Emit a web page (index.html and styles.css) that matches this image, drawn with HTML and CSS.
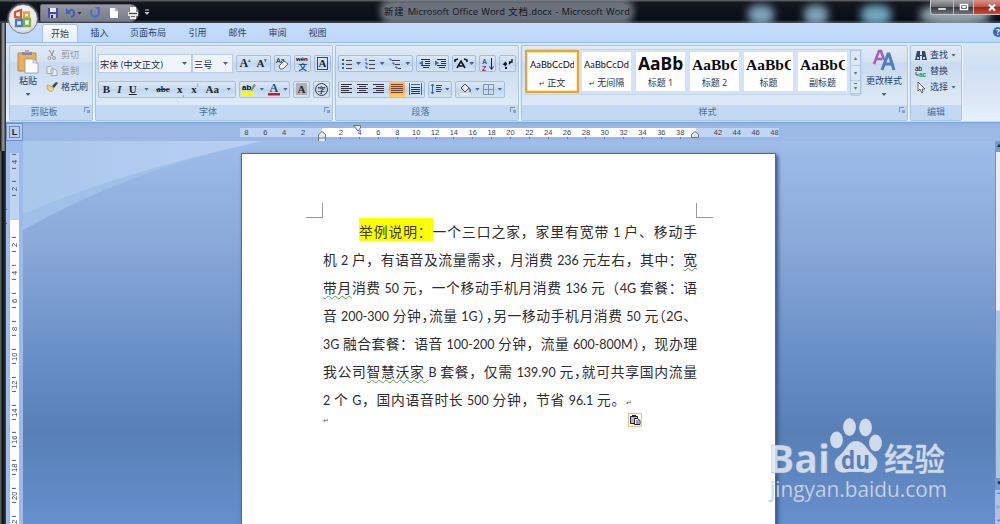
FILE: index.html
```html
<!DOCTYPE html>
<html lang="zh-CN">
<head>
<meta charset="utf-8">
<title>新建 Microsoft Office Word 文档.docx - Microsoft Word</title>
<link rel="stylesheet" href="styles.css">
</head>
<body>
<div class="window">
  <header class="titlebar">
    <i class="smudge s1"></i><i class="smudge s2"></i><i class="smudge s3"></i><i class="smudge s4"></i>
    <div class="qat">
      <svg width="12" height="12" viewBox="0 0 12 12"><path d="M1 1h10v10H2L1 10z" fill="#4a48b0"/><path d="M3 1h6v4H3z" fill="#eef"/><path d="M3 7h6v4H3z" fill="#ccd"/><path d="M4 8h2v3H4z" fill="#335"/></svg>
      <svg width="16" height="12" viewBox="0 0 16 12"><path d="M3 5q5-4 6 0t-3 5" fill="none" stroke="#3c62b8" stroke-width="2"/><path d="M1 1v6h5z" fill="#3c62b8"/><path d="M12.500 5h4l-2 2.500z" fill="#334"/></svg>
      <svg width="12" height="12" viewBox="0 0 12 12"><path d="M3 3a4 4 0 1 0 6 0" fill="none" stroke="#4770c8" stroke-width="2"/><path d="M6 0h5v5z" fill="#4770c8"/></svg>
      <svg width="10" height="12" viewBox="0 0 10 12"><path d="M1 1h5l3 3v7H1z" fill="#fff"/><path d="M6 1v3h3" fill="#bbc" stroke="#99a" stroke-width=".5"/></svg>
      <svg width="12" height="12" viewBox="0 0 12 12"><path d="M3 0h6v5H3z" fill="#fff"/><path d="M1 5h10v4H1z" fill="#ddd"/><path d="M2 6h8v1H2zM3 10h6v1H3z" fill="#444"/><path d="M3 8h6v4H3z" fill="#eee"/><path d="M4 9h4v1H4z" fill="#666"/></svg>
    </div>
    <svg class="qatmore" width="6" height="7" viewBox="0 0 6 7"><path d="M1 1h4" stroke="#bcd"/><path d="M.5 3h5L3 6z" fill="#bcd"/></svg>
    <h1 class="title">新建 Microsoft Office Word 文档.docx - Microsoft Word</h1>
    <div class="winbtns">
      <span><svg width="22" height="14"><path d="M7 8h8v2H7z" fill="#fff" stroke="#556" stroke-width=".5"/></svg></span>
      <span><svg width="19" height="14"><path d="M6.500 4.500h7v5h-7z" fill="none" stroke="#fff" stroke-width="1.500"/><path d="M8.500 6.500h3v1h-3z" fill="none" stroke="#fff"/></svg></span>
      <span class="close"><svg width="28" height="14"><path d="M15 4.500l6 6m0-6l-6 6" stroke="#fff" stroke-width="2.200"/></svg></span>
    </div>
  </header>

  <div class="orb">
    <svg width="30" height="30" viewBox="0 0 30 30"><g fill="none" stroke-width="2.300"><path d="M7 8l6-2v8l-6-1z" stroke="#d9542c"/><path d="M16 8.500h5v5h-5z" stroke="#e8a33b"/><path d="M8 16h6v6H8z" stroke="#3f7fcf"/><path d="M16 15h6v7h-6z" stroke="#7db343"/></g></svg>
  </div>

  <nav class="tabs">
    <span class="tab active">开始</span><span class="tab">插入</span><span class="tab wide">页面布局</span><span class="tab">引用</span><span class="tab">邮件</span><span class="tab">审阅</span><span class="tab">视图</span>
    <b class="help">?</b>
  </nav>

  <section class="ribbon">
    <div class="group clipboard">
      <div class="body clip">
        <div class="paste">
          <svg width="22" height="24" viewBox="0 0 22 24"><path d="M1 3h18v18H1z" fill="#e6b05c" stroke="#b98942"/><path d="M5 2h10v3H5z" fill="#889"/><path d="M8 0h4v3H8z" fill="#aab"/><path d="M8 9h8l5 4v10H8z" fill="#fbfcff" stroke="#8a96aa" stroke-width=".8"/><path d="M16 9v4h5" fill="#dde" stroke="#8a96aa" stroke-width=".6"/></svg>
          <span>粘贴</span><i class="dd"></i>
        </div>
        <div class="cmds">
          <span class="off"><svg width="10" height="10" viewBox="0 0 10 10"><path d="M2 0l4 6M7 0L4 6" stroke="#999ea6" stroke-width="1.300"/><circle cx="2.500" cy="8" r="1.500" fill="none" stroke="#999ea6"/><circle cx="7" cy="8" r="1.500" fill="none" stroke="#999ea6"/></svg>剪切</span>
          <span class="off"><svg width="12" height="10" viewBox="0 0 12 10"><path d="M1 .5h4l2 2v5H1zM5 3h4l2 2v4.500H5z" fill="#e8ecf2" stroke="#a3abb8"/></svg>复制</span>
          <span><svg width="12" height="10" viewBox="0 0 12 10"><path d="M6 4l4-4 2 1-4 5z" fill="#444"/><path d="M1 3l4 1 3 3-3 3-4-3z" fill="#efd56b" stroke="#a8862e" stroke-width=".5"/></svg>格式刷</span>
        </div>
      </div>
      <footer>剪贴板<i class="launch"></i></footer>
    </div>

    <div class="group font">
      <div class="body rows">
        <div class="row r1">
          <span class="combo c1">宋体 (中文正文)<i class="dd"></i></span><span class="combo c2">三号<i class="dd"></i></span>
          <span class="bx w34"><b class="ser big">A<sup>▴</sup></b><b class="ser">A<sup>▾</sup></b></span>
          <span class="bx w17"><svg width="15" height="15" viewBox="0 0 15 15"><text x="1" y="7" font-size="7" class="svgsans">Aa</text><path d="M4 10l5-5 4 3-5 5H5z" fill="#f4f6fb" stroke="#667"/></svg></span>
          <span class="bx w17"><svg width="15" height="15" viewBox="0 0 15 15"><text x="1" y="5" font-size="6" class="svgsans bold">wén</text><text x="3.500" y="13.500" font-size="8.500" class="svgcjk" fill="#2c4fa0">文</text></svg></span>
          <span class="bx w17"><b class="ser boxed">A</b></span>
        </div>
        <div class="row r2">
          <span class="bx w138"><b class="ser">B</b><b class="ser it">I</b><b class="ser un">U</b><i class="dd"></i><b class="ser strike">abc</b><b class="ser">x<sub>₂</sub></b><b class="ser">x<sup>²</sup></b><b class="ser">Aa</b><i class="dd"></i></span>
          <span class="bx w51"><svg width="16" height="14" viewBox="0 0 16 14"><path d="M1 10h12v3H1z" fill="#ff0"/><text x="1" y="8" font-size="8" class="svgsans bold">ab</text><path d="M9 8l4-6 2 1-4 6z" fill="#8e8f68"/></svg><i class="dd"></i><svg width="14" height="14" viewBox="0 0 14 14"><path d="M1 11h12v2.500H1z" fill="#e3121a"/><text x="2.500" y="10" font-size="12" class="svgser" fill="#284a8a">A</text></svg><i class="dd"></i></span>
          <span class="bx w17"><b class="ser shade">A</b></span>
          <span class="bx w17"><svg width="15" height="15" viewBox="0 0 15 15"><circle cx="7.500" cy="7.500" r="6" fill="none" stroke="#334"/><text x="3.500" y="10.500" font-size="8" class="svgcjk thin">字</text></svg></span>
        </div>
      </div>
      <footer>字体<i class="launch"></i></footer>
    </div>

    <div class="group para">
      <div class="body rows">
        <div class="row r1 tight">
          <span class="bx w74">
            <svg width="12" height="12" viewBox="0 0 12 12"><path d="M1 1h2v2H1zM1 5h2v2H1zM1 9h2v2H1z" fill="#3a5b9b"/><path d="M5 2.500h6M5 6.500h6M5 10.500h6" stroke="#445"/></svg><i class="dd"></i>
            <svg width="12" height="12" viewBox="0 0 12 12"><path d="M2 0v3M1 5h2v2M1 9h2v2" fill="none" stroke="#3a5b9b"/><path d="M5 2.500h6M5 6.500h6M5 10.500h6" stroke="#445"/></svg><i class="dd"></i>
            <svg width="14" height="12" viewBox="0 0 14 12"><path d="M1 1h2v2M4 5h2v2M7 9h2v2" fill="none" stroke="#3a5b9b"/><path d="M4 2.500h8M7 6.500h5M10 10.500h3" stroke="#445"/></svg><i class="dd"></i>
          </span>
          <span class="bx w33"><svg width="13" height="12" viewBox="0 0 13 12"><path d="M3 1.500h9M7 3.500h5M7 5.500h5M3 7.500h9M5 9.500h6" stroke="#334"/><path d="M5 2.500L1 5l4 2.500z" fill="#3d65ad"/></svg><svg width="13" height="12" viewBox="0 0 13 12"><path d="M3 1.500h9M7 3.500h5M7 5.500h5M3 7.500h9M5 9.500h6" stroke="#334"/><path d="M1 2.500L5 5 1 7.500z" fill="#3d65ad"/></svg></span>
          <span class="bx w24"><svg width="14" height="12" viewBox="0 0 14 12"><path d="M3 10l4-7 4 7M5 8h4M1 2l3-1M1 4V1M10 1l3 1v2" fill="none" stroke="#112" stroke-width="1.600"/></svg><i class="dd"></i></span>
          <span class="bx w17"><svg width="14" height="14" viewBox="0 0 14 14"><text x="1" y="6.500" font-size="7" class="svgsans bold" fill="#3558a0">A</text><text x="1" y="13.500" font-size="7" class="svgsans bold" fill="#8c3060">Z</text><path d="M10.500 1v11M8.500 9.500l2 3 2-3" fill="none" stroke="#223"/></svg></span>
          <span class="bx w17"><svg width="12" height="12" viewBox="0 0 12 12"><path d="M10 1v3H7M9 4L7 6M5 6H2l2-2M2 6l2 2" fill="none" stroke="#112" stroke-width="1.300"/><path d="M3 9h2v2H3z" fill="#112"/></svg></span>
        </div>
        <div class="row r2 tight">
          <span class="bx w87">
            <svg width="12" height="10" viewBox="0 0 12 10"><path d="M0 .5h11M0 2.500h8M0 4.500h11M0 6.500h8M0 8.500h11" stroke="#334"/></svg>
            <svg width="12" height="10" viewBox="0 0 12 10"><path d="M0 .5h11M2 2.500h7M0 4.500h11M2 6.500h7M0 8.500h11" stroke="#334"/></svg>
            <svg width="12" height="10" viewBox="0 0 12 10"><path d="M0 .5h11M3 2.500h8M0 4.500h11M3 6.500h8M0 8.500h11" stroke="#334"/></svg>
            <em class="on"><svg width="12" height="10" viewBox="0 0 12 10"><path d="M0 .5h12M0 2.500h12M0 4.500h12M0 6.500h12M0 8.500h12" stroke="#7c4428"/></svg></em>
            <svg width="13" height="12" viewBox="0 0 13 12"><path d="M.5 0v12M12.500 0v12M2 1.500h9" stroke="#3d65ad"/><path d="M2 4.500h9M2 6.500h9M2 8.500h9M2 10.500h9" stroke="#334"/></svg>
          </span>
          <span class="bx w24"><svg width="12" height="12" viewBox="0 0 12 12"><path d="M2.500 1v10M1 3l1.500-2L4 3M1 9l1.500 2L4 9" fill="none" stroke="#3d65ad"/><path d="M6 2.500h6M6 4.500h5M6 6.500h6M6 8.500h5" stroke="#445"/></svg><i class="dd"></i></span>
          <span class="bx w50"><svg width="14" height="12" viewBox="0 0 14 12"><path d="M3 5l4-4 4 4-4 4z" fill="#eef" stroke="#556"/><path d="M11 5q2 2 1 4" stroke="#3d65ad" stroke-width="1.500" fill="none"/><path d="M1 10h12v2H1z" fill="#fff" stroke="#aa9" stroke-width=".5"/></svg><i class="dd"></i><svg width="11" height="11" viewBox="0 0 11 11"><path d="M.5.5h10v10H.5zM5.500 0v11M0 5.500h11" fill="none" stroke="#8293b0"/></svg><i class="dd"></i></span>
        </div>
      </div>
      <footer>段落<i class="launch"></i></footer>
    </div>

    <div class="group styles">
      <div class="body stylebody">
        <div class="gallery">
          <div class="st sel"><b class="n">AaBbCcDd</b><span><small>↵</small> 正文</span></div>
          <div class="st"><b class="n">AaBbCcDd</b><span><small>↵</small> 无间隔</span></div>
          <div class="st"><b class="h1">AaBb</b><span>标题 1</span></div>
          <div class="st"><b class="h2">AaBbC</b><span>标题 2</span></div>
          <div class="st"><b class="h2">AaBbC</b><span>标题</span></div>
          <div class="st"><b class="h2">AaBbC</b><span>副标题</span></div>
          <div class="sb"><i>▴</i><i>▾</i><i>▾</i></div>
        </div>
        <div class="change">
          <svg width="24" height="23" viewBox="0 0 24 23"><path d="M2 15L7 2h2l3 9M4 10h6" fill="none" stroke="#a65bb5" stroke-width="2.500"/><path d="M10 21l6-16h1l5 16M12 15h8" fill="none" stroke="#4d7fc0" stroke-width="3"/></svg>
          <span>更改样式</span><i class="dd"></i>
        </div>
      </div>
      <footer>样式<i class="launch"></i></footer>
    </div>

    <div class="group edit">
      <div class="body cmds">
        <span><svg width="12" height="11" viewBox="0 0 12 11"><path d="M2 1h3v4h2V1h3l2 9H7V6H5v4H0z" fill="#33466f"/><path d="M2 7h2v2H2zM8 7h2v2H8z" fill="#c5d5ef"/></svg>查找<i class="dd"></i></span>
        <span><svg width="12" height="11" viewBox="0 0 12 11"><text x="0" y="5" font-size="6.500" class="svgsans">ab</text><text x="4" y="11" font-size="6.500" class="svgsans bold" fill="#294">ac</text><path d="M1 6v3h3" fill="none" stroke="#3558a0"/></svg>替换</span>
        <span><svg width="12" height="12" viewBox="0 0 12 12"><path d="M3 1v9l2-2 2 4 1-1-1-3h3z" fill="#fff" stroke="#445" stroke-width=".8"/></svg>选择<i class="dd"></i></span>
      </div>
      <footer>编辑</footer>
    </div>
  </section>

  <main class="work">
    <div class="rulerbar">
      <span class="tabsel">L</span>
      <div class="hruler"><b>8</b><b>6</b><b>4</b><b>2</b><b></b><b class="t">2</b><b class="t">4</b><b class="t">6</b><b class="t">8</b><b class="t">10</b><b class="t">12</b><b class="t">14</b><b class="t">16</b><b class="t">18</b><b class="t">20</b><b class="t">22</b><b class="t">24</b><b class="t">26</b><b class="t">28</b><b class="t">30</b><b class="t">32</b><b class="t">34</b><b class="t">36</b><b class="t">38</b><b></b><b>42</b><b>44</b><b>46</b><b>48</b>
        <svg class="mark m1" width="8" height="11" viewBox="0 0 8 11"><path d="M.5 10.500v-7L4 .5l3.500 3v7zM.5 7h7" fill="#e3eaf5" stroke="#6b7688"/></svg>
        <svg class="mark m2" width="8" height="7" viewBox="0 0 8 7"><path d="M.5.5h7V3L5 6z" fill="#e3eaf5" stroke="#6b7688"/></svg>
        <svg class="mark m3" width="8" height="7" viewBox="0 0 8 7"><path d="M.5 6.500v-3L4 .5l3.500 3v3z" fill="#e3eaf5" stroke="#6b7688"/></svg>
      </div>
    </div>
    <div class="canvas">
      <div class="vruler"><b>4</b><b>2</b><b></b><b>2</b><b>4</b><b>6</b><b>8</b><b>10</b><b>12</b><b>14</b><b>16</b><b>18</b><b>20</b><b>22</b></div>
      <div class="desk">
        <svg class="swoosh" width="240" height="90" viewBox="0 0 240 90"><defs><linearGradient id="sw" x2="1"><stop stop-color="#a8c8ea"/><stop offset="1" stop-color="#bacff4"/></linearGradient></defs><path d="M0 0h240Q110 27 0 89z" fill="#9fc0e8"/><path d="M0 0h240Q100 30 0 73z" fill="url(#sw)"/></svg>
        <article class="page">
          <div class="corners"><i class="cl"></i><i class="cr"></i></div>
          <p class="line first"><mark>举例说明：</mark>一个三口之家，家里有宽带 <span class="l">1</span> 户、移动手</p>
          <p class="line">机 <span class="l">2</span> 户，有语音及流量需求，月消费 <span class="l">236</span> 元左右，其中：<u>宽</u></p>
          <p class="line"><u>带月</u>消费 <span class="l">50</span> 元，一个移动手机月消费 <span class="l">136</span> 元（<span class="l">4G</span> 套餐：语</p>
          <p class="line">音 <span class="l">200-300</span> 分钟<s>，</s>流量 <span class="l">1G</span>）<s>，</s>另一移动手机月消费 <span class="l">50</span> 元<s class="o">（</s><span class="l">2G</span>、</p>
          <p class="line"><span class="l">3G</span> 融合套餐：语音 <span class="l">100-200</span> 分钟，流量 <span class="l">600-800M</span>），现办理</p>
          <p class="line">我公司<u>智慧沃家 </u><span class="l">B</span> 套餐，仅需 <span class="l">139.90</span> 元<s>，</s>就可共享国内流量</p>
          <p class="line last"><span class="l">2</span> 个 <span class="l">G</span>，国内语音时长 <span class="l">500</span> 分钟，节省 <span class="l">96.1</span> 元。<small>↵</small></p>
          <div class="after"><small>↵</small><svg width="14" height="14" viewBox="0 0 14 14"><path d="M.5.5h13v13H.5z" fill="#fffdf2" stroke="#dcc785"/><path d="M2.500 3.500h7v7h-7z" fill="#b9b9cc" stroke="#223"/><path d="M4 2h4v2H4z" fill="#223"/><path d="M6.500 5.500h3l2.500 2v4H6.500z" fill="#fff" stroke="#224"/><path d="M8 8h3M8 10h3" stroke="#446"/></svg></div>
        </article>
        <aside class="vscroll"><i class="split"></i><i class="up">▲</i><i class="track"></i><i class="down">▼</i><i class="nav">⌃</i><i class="nav">○</i><i class="nav">⌄</i></aside>
      </div>
    </div>
  </main>

  <svg class="watermark" width="190" height="95" viewBox="0 0 190 95">
    <g fill="#e0e7f3" fill-opacity=".88" stroke="#7687a6" stroke-opacity=".3" stroke-width=".8">
      <text x="6" y="58" class="wmbold" font-size="40" textLength="62" lengthAdjust="spacingAndGlyphs">Bai</text>
      <ellipse cx="74.500" cy="25" rx="6.500" ry="8.500"/><ellipse cx="87.500" cy="12" rx="6.500" ry="9"/><ellipse cx="103.500" cy="12.500" rx="6.500" ry="9"/><ellipse cx="113.500" cy="28" rx="6.500" ry="8.500"/>
      <path d="M94 26c7 0 10 6 14 11 5 5 9 8 7 14-2 7-8 8-14 6h-14c-7 2-13 0-14-6-2-6 3-9 8-14 4-5 6-11 13-11z"/>
      <text x="122" y="56" class="wmcjk" font-size="32" textLength="61" lengthAdjust="spacingAndGlyphs">经验</text>
      <text x="8" y="82" class="wmurl" font-size="22" textLength="177" lengthAdjust="spacingAndGlyphs">jingyan.baidu.com</text>
    </g>
    <text x="79" y="54" class="wmbold" font-size="25" textLength="29" lengthAdjust="spacingAndGlyphs" fill="#587fb8">du</text>
  </svg>
</div>
</body>
</html>
```

FILE: styles.css
```css
* { box-sizing: border-box; }
body { margin: 0; font-family: "Open Sans", "Noto Sans CJK SC", sans-serif; font-size: 9px; color: #24426f; }
i, em { font-style: normal; }
svg { display: block; flex: none; }
.window { position: relative; width: 1000px; height: 524px; overflow: hidden; display: flex; flex-direction: column; background: #14161c; }
.window::before { content: ""; position: absolute; left: 0; top: 0; width: 6px; height: 151px; background: linear-gradient(90deg, #222 0 1px, #777 2px, #999 4px, #333 5px); }
.window::after { content: ""; position: absolute; left: 0; top: 151px; width: 6px; height: 373px; background: linear-gradient(90deg, #555a55 0 1px, #15171c 2px 4px, #454e5c 6px); }

/* Title bar */
.titlebar { position: relative; display: flex; align-items: flex-start; height: 23px; flex: none; overflow: hidden; background: linear-gradient(#55585d 0 1px, #15181d 2px, #080d17 20px, #39414b 22px); }
.qat { display: flex; align-items: center; gap: 7px; width: 99px; height: 18px; margin: 4px 0 0 40px; padding-left: 6px; border-radius: 2px 9px 9px 2px; background: linear-gradient(#9496a2, #777a88); border: 1px solid #686b76; }
.qat svg { margin-right: 1px; }
.qat svg:nth-child(1) { margin-right: -1px; }
.qatmore { margin: 9px 0 0 5px; }
.title { margin: 3px 0 0 234px; width: 246px; height: 17px; font-size: 9.400px; line-height: 17px; font-weight: 400; text-align-last: justify; white-space: nowrap; color: #10141c; background: rgba(151,157,168,.68); box-shadow: 0 0 6px 4px rgba(151,157,168,.68); border-radius: 7px; }
.smudge { position: absolute; top: 5px; width: 24px; height: 20px; border-radius: 40%; background: #7fa3ba; filter: blur(4px); }
.s1 { left: 748px; width: 26px; } .s2 { left: 804px; } .s3 { left: 861px; width: 30px; background: #72a7bf; } .s4 { left: 920px; width: 70px; background: #93a5ad; }
.winbtns { position: relative; display: flex; margin-left: auto; width: 70px; height: 15px; border: 1px solid #c2c5ca; border-top: 0; border-right: 0; border-radius: 0 0 0 4px; overflow: hidden; }
.winbtns span { border-right: 1px solid #bbb; background: linear-gradient(#a5a7ab, #65686d 50%, #33373d 51%, #70747a); }
.winbtns .close { background: linear-gradient(#d79588, #c05142 50%, #9d2519 51%, #c94c33); }
.orb { position: absolute; z-index: 3; left: 8px; top: 4px; width: 30px; height: 30px; border-radius: 50%; background: radial-gradient(circle at 50% 40%, #fff, #e4e6ea 60%, #b1b6bf); border: 1px solid #7d8694; box-shadow: 0 0 2px #ccd5e3; }
.orb svg { margin: -1px; }

/* Tabs */
.tabs { display: flex; align-items: flex-end; height: 19px; flex: none; margin-left: 6px; padding-left: 36px; background: linear-gradient(#c6dcf9, #bdd7fa); }
.tab { width: 35px; margin-right: 12px; height: 18px; line-height: 18px; text-align: center; font-size: 9px; }
.tab.active { width: 36px; margin-right: 4px; height: 18px; background: linear-gradient(#fafcff, #e3edfa); border: 1px solid #a6c3e8; border-bottom: 0; border-radius: 3px 3px 0 0; }
.tab:nth-child(2) { margin: 0 0 0 0; }
.tab.wide { width: 38px; margin: 0 0 0 12px; }
.tab:nth-child(4) { margin: 0 5px 0 13px; }
.tab:nth-child(5) { margin-right: 5px; }
.tab:nth-child(6) { margin-right: 5px; }
.help { width: 10px; height: 10px; margin: 0 -3px 5px auto; border-radius: 50%; background: #2f6cc0; color: #fff; font-size: 8px; line-height: 10px; text-align: center; }

/* Ribbon */
.ribbon { display: flex; gap: 2px; height: 81px; flex: none; margin-left: 6px; padding: 2px 0 0 3px; background: linear-gradient(#dbe6f4, #cfdff3 25px, #dde8f5 60px, #e2f3ff 78px, #5d8dd0 80px); border-top: 1px solid #9dbce2; }
.group { display: flex; flex-direction: column; height: 76px; border: 1px solid #a9c5e5; border-radius: 2px; background: linear-gradient(#e0e9f5, #d4e2f3 15px, #c9daf0 17px, #dfebf8 60px); box-shadow: 1px 0 #f0f6fd; }
.clipboard { width: 84px; } .font { width: 238px; } .para { width: 184px; } .styles { width: 387px; } .edit { width: 52px; }
.group footer { position: relative; height: 15px; line-height: 14px; background: #c1d9f2; color: #486fa5; text-align: center; font-size: 9px; }
.clipboard footer { padding-right: 14px; } .font footer { padding-right: 12px; } .para footer { padding-right: 13px; } .styles footer { padding-right: 14px; }
.body { flex: 1; display: flex; min-height: 0; }
.launch { position: absolute; right: 3px; top: 2px; width: 5px; height: 5px; border-top: 1px solid #7c93b5; border-left: 1px solid #7c93b5; }
.launch::after { content: ""; position: absolute; left: 2px; top: 2px; width: 3px; height: 3px; background: #8da1bf; }
.dd { display: block; flex: none; width: 5px; height: 3px; background: #4a6288; clip-path: polygon(0 0, 100% 0, 50% 100%); }
.paste { display: flex; flex-direction: column; align-items: center; width: 36px; padding-top: 4px; }
.paste span { line-height: 14px; }
.paste .dd { margin-top: 5px; }
.cmds { display: flex; flex-direction: column; gap: 2px; padding-top: 2px; }
.cmds span { display: flex; align-items: center; gap: 3px; height: 14px; line-height: 14px; white-space: nowrap; }
.cmds svg { width: 12px; }
.off { color: #8d95a0; }
.edit .cmds { padding-left: 4px; }
.rows { flex-direction: column; padding-left: 2px; }
.row { display: flex; align-items: center; gap: 3px; }
.r1 { height: 19px; margin-top: 8px; }
.r2 { height: 18px; margin-top: 7px; gap: 3px; }
.bx { display: flex; align-items: center; justify-content: space-around; flex: none; height: 17px; border: 1px solid #a6bddd; border-radius: 2px; background: linear-gradient(#dce8f8, #c9dbf1 45%, #bed4ef 46%, #d5e5f7); color: #1d2635; }
.w17 { width: 17px; } .w24 { width: 24px; } .w33 { width: 33px; } .w34 { width: 35px; } .w50 { width: 50px; } .w51 { width: 51px; } .w74 { width: 75px; } .w87 { width: 87px; } .w138 { width: 138px; }
.combo { display: flex; align-items: center; justify-content: space-between; height: 19px; background: #f0f5fc; border: 1px solid #b5cbe8; padding: 0 4px 0 1px; color: #1c2a44; font-size: 9.200px; flex: none; white-space: nowrap; }
.c1 { width: 94px; } .c2 { width: 41px; margin-left: -3px; }
.ser { font-family: "Liberation Serif", serif; font-size: 11px; line-height: 13px; }
.big { font-size: 12px; }
.ser sup, .ser sub { font-size: 5px; line-height: 0; color: #3d65ad; }
.it { font-style: italic; } .un { text-decoration: underline; } .strike { font-size: 9px; text-decoration: line-through; }
.boxed { border: 1px solid #445; padding: 0 1px; line-height: 11px; }
.shade { background: #b1b1b1; padding: 0 2px; line-height: 12px; }
.on { display: block; padding: 3px 2px; background: linear-gradient(#f8c48b, #fb9b42 50%, #ffd66f); }
.svgsans { font-family: "Liberation Sans", sans-serif; } .svgser { font-family: "Liberation Serif", serif; font-weight: 700; } .svgcjk { font-family: "Noto Sans CJK SC", sans-serif; font-weight: 700; } .svgcjk.thin { font-weight: 400; } .bold { font-weight: 700; }
.stylebody { padding: 3px 0 0 3px; }
.gallery { display: flex; gap: 5px; height: 46px; padding-top: 2px; width: 337px; background: #d2e3f6; border: 1px solid #c3d7ef; }
.st { width: 49px; height: 39px; overflow: hidden; background: #fff; text-align: center; color: #29334d; white-space: nowrap; flex: none; }
.st.sel { width: 54px; height: 43px; margin: -2px -1px 0 -1px; border: 2px solid #e3a53f; box-shadow: inset 0 0 0 1px #ffe8a6; }
.st.sel + .st { margin-left: -1px; }
.st b { display: block; height: 24px; line-height: 25px; font-weight: 400; color: #0c0c10; text-align: left; overflow: hidden; margin: 0 2px; }
.st.sel b { margin: 0 3px; }
.st .n { font-family: Lato, sans-serif; font-size: 9.200px; letter-spacing: .1px; }
.st .h1 { font-family: "Noto Sans", sans-serif; font-weight: 700; font-size: 17.500px; line-height: 22px; }
.st .h2 { font-family: "Liberation Serif", serif; font-weight: 700; font-size: 15.500px; }
.st span { display: block; line-height: 14px; }
.st small { font-size: 7px; }
.sb { display: flex; flex-direction: column; width: 11px; height: 44px; margin: -2px 0 0 -2px; border: 1px solid #afc7e5; background: #dce8f7; }
.sb i { flex: 1; border-bottom: 1px solid #b7cce8; text-align: center; line-height: 14px; font-size: 6px; color: #52729f; }
.sb i:last-child { text-decoration: overline; }
.change { display: flex; flex-direction: column; align-items: center; width: 44px; }
.change span { line-height: 16px; white-space: nowrap; margin-top: 1px; }
.change .dd { margin-top: 4px; }

/* Rulers */
.work { display: flex; flex-direction: column; flex: 1; margin-left: 6px; background: #9dbbe8; min-height: 0; }
.rulerbar { display: flex; align-items: center; height: 18px; flex: none; background: linear-gradient(#94b3df, #9bb9e4 5px); }
.tabsel { width: 17px; height: 18px; border: 1px solid #6f8fc4; background: #b5cef0; display: block; padding: 4px 3px; font: bold 9px/8px "Liberation Sans", sans-serif; text-align: center; color: #223; box-shadow: inset 0 0 0 2px #b5cef0, inset 0 0 0 3px #6d86b5; }
.hruler { position: relative; display: flex; margin: 0 0 0 214px; width: 547px; height: 9px; background: linear-gradient(90deg, transparent 3px, #c0d5f3 3px 85px, #fff 85px 459px, #c0d5f3 459px 542px, transparent 542px); }
.hruler b { flex: 1; position: relative; font: 400 7.500px/9px "Liberation Sans", sans-serif; text-align: center; color: #3c4454; }
.hruler .t::after { content: ""; position: absolute; left: 9px; bottom: -2px; width: 1px; height: 2px; background: #6880a8; }
.mark { position: absolute; } .m1 { left: 81px; top: 3px; } .m2 { left: 116px; top: -3px; } .m3 { left: 454px; top: 3px; }
.canvas { display: flex; flex: 1; min-height: 0; overflow: hidden; }
.vruler { flex: none; width: 9px; height: 392px; margin: 6.500px 4px 0 4px; background: linear-gradient(transparent 5px, #bfd4f3 5px 72px, #fff 72px); }
.vruler b { position: relative; display: block; height: 27.900px; writing-mode: vertical-rl; transform: rotate(180deg); text-align: center; font: 400 7.500px/9px "Liberation Sans", sans-serif; color: #3c4454; }
.vruler b::before, .vruler b::after { content: ""; position: absolute; left: 3px; width: 4px; height: 1px; background: #555e70; top: 7px; }
.vruler b::after { top: auto; bottom: 6px; }

/* Document */
.desk { position: relative; flex: 1; display: flex; background: linear-gradient(#9fbde9, #8ba9d9 100px, #6a90c8 210px, #5880b6 290px, #668fcd 383px); }
.swoosh { position: absolute; left: 0; top: 0; }
.page { position: relative; width: 535px; height: 400px; margin: 12px 0 0 218px; padding: 49px 63px 0 65px; border: 1px solid #59698c; background: #fff; box-shadow: 2px 2px 4px #37527f; flex: none; }
.corners { display: flex; justify-content: space-between; height: 15px; }
.corners i { width: 17px; border-bottom: 1px solid #9a9a9a; }
.corners .cl { border-right: 1px solid #9a9a9a; margin-left: -1px; } .corners .cr { border-left: 1px solid #9a9a9a; margin-right: -1px; }
.line { margin: 0 0 0 16px; width: 374px; height: 28px; line-height: 27px; font-family: "Noto Sans CJK SC", sans-serif; font-weight: 400; font-size: 13.800px; color: #2c2c30; white-space: nowrap; text-align-last: justify; text-autospace: no-autospace; }
.first { padding-left: 36px; }
.last { width: 309px; }
.line .l { font-family: Lato, sans-serif; font-size: 12.450px; font-weight: 400; }
.line mark { background: #ff0; color: #38380f; padding: 3px 0 0; }
.line s { text-decoration: none; letter-spacing: -.5em; }
.line s.o { letter-spacing: 0; margin-left: -.5em; }
.line u { text-decoration: underline wavy #58a05a .6px; text-underline-offset: 2px; }
.line small, .after small { font-size: 7px; color: #555; }
.after { display: flex; justify-content: space-between; width: 319px; margin-left: 16px; line-height: 14px; }
.after svg { margin-top: -1px; }
.vscroll { display: flex; flex-direction: column; width: 5px; height: 402px; margin: -18px 0 0 auto; background: #a9c2e8; color: #1c2b48; font: 6px/10px sans-serif; overflow: hidden; flex: none; }
.vscroll i { flex: none; height: 12px; padding-left: 1px; }
.vscroll .split { height: 17px; border-top: 3px solid #17315f; background: #d3dced; }
.vscroll .up, .vscroll .down { background: #7898c9; }
.vscroll .track { height: 326px; background: linear-gradient(#e9eef6 0 158px, #aec4e7 159px); border-left: 1px solid #7390bf; }

/* Watermark */
.watermark { position: absolute; left: 762px; top: 415px; }
.wmbold { font-family: "Open Sans", sans-serif; font-weight: 700; }
.wmcjk { font-family: "Noto Sans CJK SC", sans-serif; font-weight: 700; }
.wmurl { font-family: "Open Sans", sans-serif; }
```
